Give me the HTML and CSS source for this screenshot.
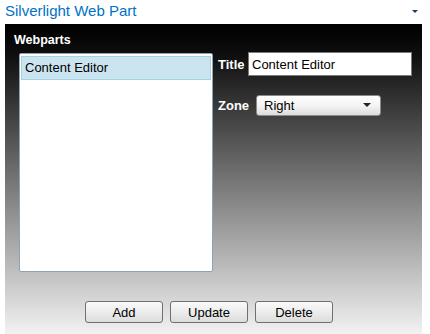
FILE: index.html
```html
<!DOCTYPE html>
<html lang="en">
<head>
  <meta charset="UTF-8">
  <title>Silverlight Web Part</title>
  <link rel="stylesheet" href="styles.css">
</head>
<body>

  <div id="header">
    <span id="partTitle">Silverlight Web Part</span>
    <span id="partMenu"></span>
  </div>

  <div id="panel">
    <div id="groupTitle">Webparts</div>
    <div id="content">
      <div id="list">
        <div class="item selected">Content Editor</div>
      </div>
      <div id="fields">
        <div class="field">
          <label>Title</label>
          <input id="titleBox" type="text" value="Content Editor">
        </div>
        <div class="field zone">
          <label>Zone</label>
          <div id="zoneSelect">
            <span>Right</span>
            <span class="arrow"></span>
          </div>
        </div>
      </div>
    </div>
    <div id="actions">
      <button class="action">Add</button>
      <button class="action">Update</button>
      <button class="action">Delete</button>
    </div>
  </div>

</body>
</html>
```

FILE: styles.css
```css
* {
  margin: 0;
  padding: 0;
  box-sizing: border-box;
}

body {
  font-family: "Liberation Sans", Arial, sans-serif;
  background: #fff;
  padding: 0 5px;
  height: 334px;
  overflow: hidden;
}

#header {
  height: 24px;
  display: flex;
  justify-content: space-between;
  align-items: flex-start;
  padding-top: 2px;
}

#partTitle {
  color: #0072c6;
  font-size: 15px;
  line-height: 17px;
}

#partMenu {
  width: 0;
  height: 0;
  margin: 8px 7px 0 0;
  border-left: 3px solid transparent;
  border-right: 3px solid transparent;
  border-top: 3px solid #1f3c5c;
}

#panel {
  width: 417px;
  height: 320px;
  background: linear-gradient(#000 0px, #0e0e0e 30px, #f2f2f2 310px);
  padding: 8px 9px 0 9px;
}

#groupTitle {
  color: #fff;
  font-size: 12.5px;
  font-weight: bold;
  line-height: 16px;
  margin-bottom: 5px;
}

#content {
  display: flex;
  margin-left: 5px;
}

#list {
  width: 194px;
  height: 219px;
  background: #fff;
  border: 1px solid #8ea2b5;
  border-radius: 2px;
  padding: 2px 1px;
}

.item {
  height: 24px;
  line-height: 21px;
  padding-left: 3px;
  font-size: 13px;
  color: #000;
  border: 1px solid transparent;
}

.item.selected {
  background: #cbe5f0;
  border-color: #a6d3e4;
}

#fields {
  margin-left: 5px;
  flex: 1;
}

.field {
  display: flex;
  align-items: center;
  height: 24px;
  margin-top: -1px;
}

.field label {
  color: #fff;
  font-size: 13px;
  font-weight: bold;
  width: 30px;
}

#titleBox {
  width: 164px;
  height: 24px;
  border: 1px solid #7a7a7a;
  background: #fff;
  font-family: "Liberation Sans", Arial, sans-serif;
  font-size: 13px;
  padding: 0 3px;
  color: #000;
}

.field.zone {
  margin-top: 18px;
  height: 22px;
}

.field.zone label {
  width: 38px;
}

#zoneSelect {
  width: 125px;
  height: 21px;
  display: flex;
  align-items: center;
  justify-content: space-between;
  padding: 0 9px 0 7px;
  border: 1px solid #8a8a8a;
  border-radius: 3px;
  background: linear-gradient(#fff, #f4f4f4 50%, #dcdcdc);
  font-size: 13px;
  color: #000;
}

#zoneSelect .arrow {
  width: 0;
  height: 0;
  border-left: 4px solid transparent;
  border-right: 4px solid transparent;
  border-top: 4px solid #222;
}

#actions {
  display: flex;
  gap: 7px;
  padding-left: 71px;
  margin-top: 29px;
}

.action {
  width: 78px;
  height: 22px;
  border: 1px solid #707070;
  border-radius: 3px;
  background: linear-gradient(#fafafa, #ececec 50%, #dcdcdc);
  font-family: "Liberation Sans", Arial, sans-serif;
  font-size: 13px;
  color: #000;
}
```
